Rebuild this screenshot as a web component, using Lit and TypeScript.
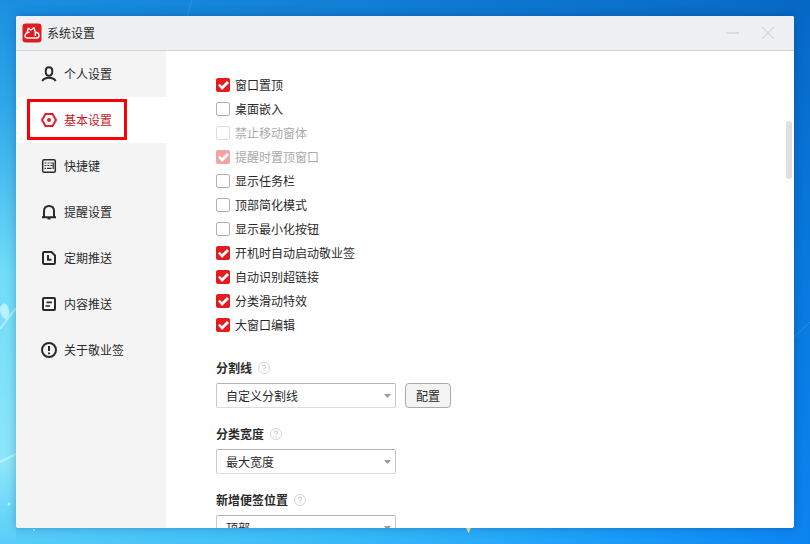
import { LitElement, html, css, svg } from "lit";
import { customElement, state } from "lit/decorators.js";
import { classMap } from "lit/directives/class-map.js";

const icons = {
  user: svg`<path d="M8 1.200c2.300 0 3.300 1.500 3.300 4S10.200 9.700 8 9.700 4.700 7.700 4.700 5.200 5.700 1.200 8 1.200z" /><path d="M1.300 15c1.300-2.200 3.700-3.200 6.700-3.200s5.400 1 6.700 3.200" />`,
  gear: svg`<path d="M4.500 1.900h7L15 8l-3.500 6.100h-7L1 8z" /><circle class="solid" cx="8" cy="8" r="2" />`,
  keyboard: svg`<rect x="1.700" y="1.700" width="12.600" height="12.600" rx="1.500" stroke-width="1.500" /><path stroke-width="1.200" stroke-dasharray="2 1" d="M3.500 5h8M3.500 7.500h8" /><path stroke-width="1.200" d="M3.500 10.300h1.500M6 10.300h4.500M12.200 4.400v6.500" />`,
  bell: svg`<path d="M3 13V7.200C3 3.700 5 2 8 2s5 1.700 5 5.200V13M1 13.200h14" /><path d="M6.500 14.700h3" stroke-width="1.500" />`,
  schedule: svg`<path d="M2 3.300C2 2.500 2.500 2 3.300 2h7.200L14 5.500v7.200c0 .8-.5 1.300-1.300 1.300H3.300C2.500 14 2 13.500 2 12.700z" /><path d="M7 5v4.700h3.500" />`,
  content: svg`<rect x="2" y="2" width="12" height="12" rx="1" /><path d="M5.500 6.300h5.500M4.500 10h4.500" stroke-width="1.700" />`,
  about: svg`<circle cx="8" cy="8" r="7" /><path d="M8 4v5M8 10.500v1.700" />`,
};

interface NavItem { id: string; label: string; icon: keyof typeof icons }
interface Option { label: string; checked?: boolean; disabled?: boolean }
interface Field { id: string; label: string; value: string; action?: string }

const NAV: NavItem[] = [
  { id: "personal", label: "个人设置", icon: "user" },
  { id: "basic", label: "基本设置", icon: "gear" },
  { id: "shortcut", label: "快捷键", icon: "keyboard" },
  { id: "remind", label: "提醒设置", icon: "bell" },
  { id: "schedule", label: "定期推送", icon: "schedule" },
  { id: "content", label: "内容推送", icon: "content" },
  { id: "about", label: "关于敬业签", icon: "about" },
];

const OPTIONS: Option[] = [
  { label: "窗口置顶", checked: true },
  { label: "桌面嵌入" },
  { label: "禁止移动窗体", disabled: true },
  { label: "提醒时置顶窗口", checked: true, disabled: true },
  { label: "显示任务栏" },
  { label: "顶部简化模式" },
  { label: "显示最小化按钮" },
  { label: "开机时自动启动敬业签", checked: true },
  { label: "自动识别超链接", checked: true },
  { label: "分类滑动特效", checked: true },
  { label: "大窗口编辑", checked: true },
];

const FIELDS: Field[] = [
  { id: "divider", label: "分割线", value: "自定义分割线", action: "配置" },
  { id: "width", label: "分类宽度", value: "最大宽度" },
  { id: "position", label: "新增便签位置", value: "顶部" },
];

@customElement("app-root")
export class AppRoot extends LitElement {
  @state() private current = "basic";

  static styles = css`
    :host {
      display: block;
      position: relative;
      box-sizing: border-box;
      height: 100vh;
      padding: 16px;
      overflow: hidden;
      font: 12px/18px "Noto Sans CJK SC", sans-serif;
      color: #2a2a2a;
      background:
        linear-gradient(to bottom, #1a8fe0 0%, #2fa8ea 20%, #6fdcf8 50%, #8be6fb 85%, #58cdf8 100%) left / 16px 100% no-repeat,
        linear-gradient(to right, #58cdf8 0%, #35b8f8 45%, #1a9cf8 75%, #0c84f0 100%) bottom / 100% 16px no-repeat,
        linear-gradient(to bottom, #0768c6 0%, #0878dc 45%, #0c84f0 100%) right / 16px 100% no-repeat,
        linear-gradient(to right, #1a8fe0, #0768c6);
    }
    *, *::before { box-sizing: border-box; }
    button, select { font: inherit; color: inherit; }
    svg { display: block; fill: none; }
    .scenery { position: absolute; inset: 0; width: 100%; height: 100%; }
    .window {
      position: relative;
      display: flex;
      flex-direction: column;
      height: 100%;
      overflow: hidden;
      border-radius: 2px;
      background: #fff;
      box-shadow: 0 0 10px rgba(0, 40, 90, 0.3);
    }
    .titlebar {
      display: flex;
      flex: none;
      align-items: center;
      gap: 5px;
      height: 35px;
      padding: 0 19px 0 6px;
      background: #eff0f2;
      border-bottom: 1px solid #d0d2d5;
    }
    h1, h2 { margin: 0; font-size: 12px; }
    h1 { flex: 1; font-weight: 400; }
    .control { padding: 0; border: 0; background: none; stroke: #d8dadc; stroke-width: 2; }
    .control + .control { margin-left: 16px; }
    .body { display: flex; flex: 1; min-height: 0; }
    nav { flex: none; width: 150px; background: #f4f4f4; }
    .item {
      position: relative;
      display: flex;
      align-items: center;
      gap: 7px;
      height: 46px;
      padding-left: 25px;
      color: #2a2a2a;
      text-decoration: none;
    }
    .item svg { stroke: currentColor; stroke-width: 2; }
    .solid { fill: currentColor; stroke: none; }
    .item.active { background: #fff; color: #c4242b; }
    .item.active svg { color: #e0202b; }
    .item.active::before {
      content: "";
      position: absolute;
      left: 11px;
      top: 2px;
      width: 100px;
      height: 41px;
      border: 3px solid #f00;
    }
    main { position: relative; flex: 1; overflow: hidden; padding: 22px 50px; }
    .option { display: flex; align-items: center; gap: 5px; height: 24px; width: fit-content; }
    .option.off { color: #aaa; }
    .option input {
      appearance: none;
      width: 14px;
      height: 14px;
      margin: 0;
      border: 1px solid #b0b0b0;
      border-radius: 2px;
      background: #fff;
    }
    .option input:checked { border: 0; background: #e31a1e; }
    .option input:disabled { border-color: #ddd; }
    .option input:checked:disabled { background: #f4a3a5; }
    .option input:checked::before {
      content: "";
      display: block;
      width: 14px;
      height: 14px;
      background: #fff;
      clip-path: polygon(2px 7px, 4px 6px, 6px 8px, 11px 3px, 13px 5px, 6px 12px);
    }
    .fields { display: grid; gap: 16px; padding-top: 21px; }
    .field { display: grid; gap: 5px; }
    .heading { display: flex; align-items: center; gap: 6px; height: 20px; }
    h2 { font-weight: 700; }
    .help { padding: 0; border: 0; background: none; }
    .row { display: flex; gap: 9px; }
    .picker { position: relative; width: 180px; }
    .picker svg { position: absolute; right: 5px; top: 11px; pointer-events: none; }
    select {
      appearance: none;
      display: block;
      width: 100%;
      height: 25px;
      padding: 0 20px 0 9px;
      border: 1px solid #c8c8c8;
      border-top-color: #b4b4b4;
      border-bottom-color: #ddd;
      border-radius: 2px;
      background: #fff;
    }
    .config {
      width: 46px;
      height: 25px;
      padding: 0;
      border: 1px solid #aaa;
      border-radius: 4px;
      background: #f3f3f3;
    }
    .thumb {
      position: absolute;
      top: 70px;
      right: 2px;
      width: 6px;
      height: 58px;
      border-radius: 3px;
      background: #e0e0e0;
    }
  `;

  private go(e: Event, id: string) {
    e.preventDefault();
    this.current = id;
  }

  render() {
    return html`
      <svg class="scenery" viewBox="0 0 810 544" aria-hidden="true">
        <path d="M0 329L16 308M0 462L16 454" stroke="#c8f5ff" stroke-width="2" opacity=".7" />
        <path d="M4 303q6 3 5 12l-3 5q-7-5-6-13z" fill="#b8f2ff" />
        <circle cx="9" cy="504" r="1.500" fill="#bff2ff" />
        <circle cx="34" cy="530" r="1" fill="#bff2ff" />
        <path d="M187 16L192 0M794 337L810 322" stroke="#4fb0f0" opacity=".4" />
        <path d="M465 526h7l-3.500 7z" fill="#f1e3a0" />
      </svg>
      <div class="window">
        <header class="titlebar">
          <svg width="20" height="20" viewBox="0 0 20 20" aria-hidden="true">
            <rect width="19" height="19" x=".5" y=".5" rx="3" fill="#e31a1e" />
            <path d="M5.500 15C3.600 15 2.900 13.800 3 12.600 3.200 11 4.300 10.300 5 9.800L6.300 5.300 9 7 12 4.600 13.300 9.300C16 9.300 17 10.800 17 12.500 17 14.200 16.200 15 14.700 15zM5 9.800L7.500 9M13.300 9.300V13" stroke="#fff" stroke-width="1.400" stroke-linejoin="round" />
          </svg>
          <h1>系统设置</h1>
          <button class="control" aria-label="最小化"><svg width="14" height="14"><path d="M0 7h13" /></svg></button>
          <button class="control" aria-label="关闭"><svg width="14" height="14"><path d="M1 1l12 12M13 1L1 13" stroke-width="1.500" /></svg></button>
        </header>
        <div class="body">
          <nav>
            ${NAV.map((n) => html`
              <a href="#${n.id}" class=${classMap({ item: true, active: n.id === this.current })} @click=${(e: Event) => this.go(e, n.id)}>
                <svg width="16" height="16" viewBox="0 0 16 16" aria-hidden="true">${icons[n.icon]}</svg>${n.label}
              </a>`)}
          </nav>
          <main>
            ${OPTIONS.map((o) => html`
              <label class=${classMap({ option: true, off: !!o.disabled })}>
                <input type="checkbox" ?checked=${o.checked} ?disabled=${o.disabled} />${o.label}
              </label>`)}
            <div class="fields">
              ${FIELDS.map((f) => html`
                <section class="field">
                  <div class="heading">
                    <h2><label for=${f.id}>${f.label}</label></h2>
                    <button class="help" aria-label="帮助">
                      <svg width="12" height="12" viewBox="0 0 12 12" stroke="#d4d4d4"><circle cx="6" cy="6" r="5.500" /><path d="M4.300 4.700C4.300 2.500 7.700 2.600 7.700 4.700 7.700 5.800 6 5.800 6 7.200M6 8.300v1.200" stroke-width="1.200" /></svg>
                    </button>
                  </div>
                  <div class="row">
                    <div class="picker">
                      <select id=${f.id}><option>${f.value}</option></select>
                      <svg width="7" height="4"><path d="M0 0h7L3.500 4z" fill="#999" /></svg>
                    </div>
                    ${f.action ? html`<button class="config">${f.action}</button>` : null}
                  </div>
                </section>`)}
            </div>
            <div class="thumb"></div>
          </main>
        </div>
      </div>
    `;
  }
}
